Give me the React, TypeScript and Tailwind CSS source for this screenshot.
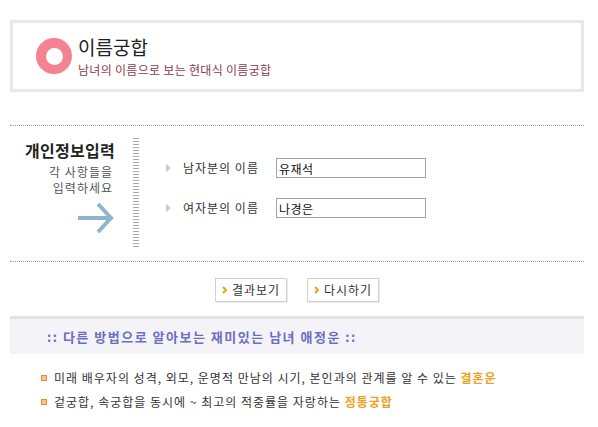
import React from "react";

function FormRow({ label, value }: { label: string; value: string }) {
  return (
    <div className="flex items-center h-[20px]">
      <span className="w-0 h-0 border-y-[4px] border-y-transparent border-l-[5px] border-l-[#cccccc]" />
      <span className="ml-[12px] w-[93px] text-[12px] tracking-[1px] text-[#333333] leading-[20px]">{label}</span>
      <input
        readOnly
        defaultValue={value}
        className="w-[150px] h-[20px] border border-[#a3a3a3] px-[2px] text-[12px] tracking-[0.5px] text-[#111111] outline-none"
      />
    </div>
  );
}

function ActionButton({ label }: { label: string }) {
  return (
    <button className="w-[72px] h-[24px] flex items-center justify-center gap-[5px] border border-[#d0d0d0] bg-white text-[12px] tracking-[1px] text-[#333333] shadow-[1px_1px_0_#ececec]">
      <svg width="5" height="8" viewBox="0 0 5 8">
        <path d="M1 1 L4 4 L1 7" fill="none" stroke="#eea21a" strokeWidth="2" />
      </svg>
      <span>{label}</span>
    </button>
  );
}

export default function App() {
  return (
    <div
      className="w-[598px] h-[427px] bg-white overflow-hidden"
      style={{ fontFamily: '"Noto Sans CJK KR", "Noto Sans", sans-serif' }}
    >
      <div className="ml-[10px] w-[574px] pt-[20px]">
        {/* header */}
        <div className="h-[72px] border-[3px] border-[#e8e8e8] flex items-center pl-[23px] gap-[6px]">
          <div className="w-[36px] h-[36px] rounded-full bg-[#f5838f] flex items-center justify-center">
            <div className="w-[17px] h-[17px] rounded-full bg-white" />
          </div>
          <div className="flex flex-col">
            <div className="text-[19px] leading-[28px] text-[#222222]">이름궁합</div>
            <div className="text-[12px] leading-[18px] tracking-[0.3px] text-[#8a3a52]">남녀의 이름으로 보는 현대식 이름궁합</div>
          </div>
        </div>

        <div className="mt-[33px] border-t border-dotted border-[#999999]" />

        {/* input section */}
        <div className="flex h-[135px]">
          <div className="w-[105px] pt-[14px] flex flex-col items-end">
            <div className="text-[16px] font-bold leading-[20px] tracking-[0.3px] text-[#222222]">개인정보입력</div>
            <div className="mt-[4px] text-[12px] leading-[16px] tracking-[1px] text-[#555555] text-right pr-[2px]">
              각 사항들을
              <br />
              입력하세요
            </div>
            <svg className="mt-[6px]" width="38" height="32" viewBox="0 0 38 32">
              <line x1="1" y1="16" x2="34" y2="16" stroke="#8fb5ca" strokeWidth="4" />
              <polyline points="21,2 34,16 21,30" fill="none" stroke="#8fb5ca" strokeWidth="4" />
            </svg>
          </div>
          <div className="ml-[18px] mt-[12px] w-[6px] h-[109px] bg-[repeating-linear-gradient(to_bottom,#a8a8a8_0,#a8a8a8_1px,transparent_1px,transparent_3px)]" />
          <div className="ml-[27px] pt-[32px] flex flex-col gap-[20px]">
            <FormRow label="남자분의 이름" value="유재석" />
            <FormRow label="여자분의 이름" value="나경은" />
          </div>
        </div>

        <div className="border-t border-dotted border-[#999999]" />

        {/* buttons */}
        <div className="mt-[16px] flex justify-center gap-[20px]">
          <ActionButton label="결과보기" />
          <ActionButton label="다시하기" />
        </div>

        {/* other services bar */}
        <div className="mt-[14px] border-t-[3px] border-[#e2e2e2] bg-[#f4f4f8] h-[38px] flex items-center pl-[37px]">
          <span className="text-[13px] font-bold text-[#6d6dc4] tracking-[1.5px]">
            :: 다른 방법으로 알아보는 재미있는 남녀 애정운 ::
          </span>
        </div>

        <ul className="mt-[14px] pl-[31px] flex flex-col gap-[4px]">
          <li className="flex items-center h-[20px] gap-[7px] text-[12px] tracking-[1px] text-[#333333]">
            <span className="w-[6px] h-[6px] bg-[#fbc28a] border border-[#ef8a3a]" />
            <span>
              미래 배우자의 성격, 외모, 운명적 만남의 시기, 본인과의 관계를 알 수 있는{" "}
              <span className="font-bold text-[#f0a020]">결혼운</span>
            </span>
          </li>
          <li className="flex items-center h-[20px] gap-[7px] text-[12px] tracking-[1px] text-[#333333]">
            <span className="w-[6px] h-[6px] bg-[#fbc28a] border border-[#ef8a3a]" />
            <span>
              겉궁합, 속궁합을 동시에 ~ 최고의 적중률을 자랑하는{" "}
              <span className="font-bold text-[#f0a020]">정통궁합</span>
            </span>
          </li>
        </ul>
      </div>
    </div>
  );
}
